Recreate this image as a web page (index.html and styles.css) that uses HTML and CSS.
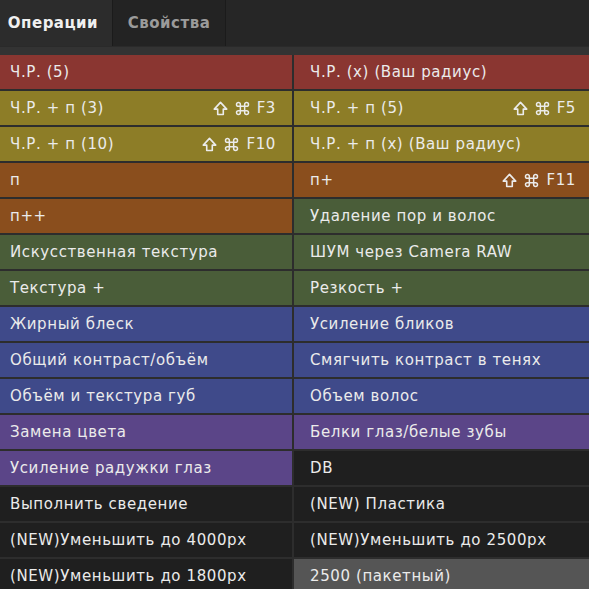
FILE: index.html
```html
<!DOCTYPE html>
<html lang="ru">
<head>
<meta charset="utf-8">
<title>Операции</title>
<link rel="stylesheet" href="styles.css">
</head>
<body>
<div class="panel">
  <div class="tabs">
    <div class="tab active">Операции</div>
    <div class="tab">Свойства</div>
    <div class="tab-fill"></div>
  </div>
  <div class="strip"></div>
  <div class="grid">
    <div class="btn red"><span>Ч.Р. (5)</span></div>
    <div class="btn red"><span>Ч.Р. (x) (Ваш радиус)</span></div>

    <div class="btn yellow"><span>Ч.Р. + п (3)</span><span class="keys"><svg class="shift" viewBox="0 0 14 14"><path d="M7 1.3 L12.8 7.6 H9.6 V12.6 H4.4 V7.6 H1.2 Z" fill="none" stroke="currentColor" stroke-width="1.5" stroke-linejoin="round"/></svg><svg class="cmd" viewBox="0 0 14 14"><path d="M5 5 H9 V9 H5 Z M5 5 V3.2 A1.8 1.8 0 1 0 3.2 5 H5 M9 5 V3.2 A1.8 1.8 0 1 1 10.8 5 H9 M5 9 V10.8 A1.8 1.8 0 1 1 3.2 9 H5 M9 9 V10.8 A1.8 1.8 0 1 0 10.8 9 H9" fill="none" stroke="currentColor" stroke-width="1.4"/></svg><span>F3</span></span></div>
    <div class="btn yellow"><span>Ч.Р. + п (5)</span><span class="keys"><svg class="shift" viewBox="0 0 14 14"><path d="M7 1.3 L12.8 7.6 H9.6 V12.6 H4.4 V7.6 H1.2 Z" fill="none" stroke="currentColor" stroke-width="1.5" stroke-linejoin="round"/></svg><svg class="cmd" viewBox="0 0 14 14"><path d="M5 5 H9 V9 H5 Z M5 5 V3.2 A1.8 1.8 0 1 0 3.2 5 H5 M9 5 V3.2 A1.8 1.8 0 1 1 10.8 5 H9 M5 9 V10.8 A1.8 1.8 0 1 1 3.2 9 H5 M9 9 V10.8 A1.8 1.8 0 1 0 10.8 9 H9" fill="none" stroke="currentColor" stroke-width="1.4"/></svg><span>F5</span></span></div>

    <div class="btn yellow"><span>Ч.Р. + п (10)</span><span class="keys"><svg class="shift" viewBox="0 0 14 14"><path d="M7 1.3 L12.8 7.6 H9.6 V12.6 H4.4 V7.6 H1.2 Z" fill="none" stroke="currentColor" stroke-width="1.5" stroke-linejoin="round"/></svg><svg class="cmd" viewBox="0 0 14 14"><path d="M5 5 H9 V9 H5 Z M5 5 V3.2 A1.8 1.8 0 1 0 3.2 5 H5 M9 5 V3.2 A1.8 1.8 0 1 1 10.8 5 H9 M5 9 V10.8 A1.8 1.8 0 1 1 3.2 9 H5 M9 9 V10.8 A1.8 1.8 0 1 0 10.8 9 H9" fill="none" stroke="currentColor" stroke-width="1.4"/></svg><span>F10</span></span></div>
    <div class="btn yellow"><span>Ч.Р. + п (x) (Ваш радиус)</span></div>

    <div class="btn orange"><span>п</span></div>
    <div class="btn orange"><span>п+</span><span class="keys"><svg class="shift" viewBox="0 0 14 14"><path d="M7 1.3 L12.8 7.6 H9.6 V12.6 H4.4 V7.6 H1.2 Z" fill="none" stroke="currentColor" stroke-width="1.5" stroke-linejoin="round"/></svg><svg class="cmd" viewBox="0 0 14 14"><path d="M5 5 H9 V9 H5 Z M5 5 V3.2 A1.8 1.8 0 1 0 3.2 5 H5 M9 5 V3.2 A1.8 1.8 0 1 1 10.8 5 H9 M5 9 V10.8 A1.8 1.8 0 1 1 3.2 9 H5 M9 9 V10.8 A1.8 1.8 0 1 0 10.8 9 H9" fill="none" stroke="currentColor" stroke-width="1.4"/></svg><span>F11</span></span></div>

    <div class="btn orange"><span>п++</span></div>
    <div class="btn green"><span>Удаление пор и волос</span></div>

    <div class="btn green"><span>Искусственная текстура</span></div>
    <div class="btn green"><span>ШУМ через Camera RAW</span></div>

    <div class="btn green"><span>Текстура +</span></div>
    <div class="btn green"><span>Резкость +</span></div>

    <div class="btn blue"><span>Жирный блеск</span></div>
    <div class="btn blue"><span>Усиление бликов</span></div>

    <div class="btn blue"><span>Общий контраст/объём</span></div>
    <div class="btn blue"><span>Смягчить контраст в тенях</span></div>

    <div class="btn blue"><span>Объём и текстура губ</span></div>
    <div class="btn blue"><span>Объем волос</span></div>

    <div class="btn purple"><span>Замена цвета</span></div>
    <div class="btn purple"><span>Белки глаз/белые зубы</span></div>

    <div class="btn purple"><span>Усиление радужки глаз</span></div>
    <div class="btn black"><span>DB</span></div>

    <div class="btn black"><span>Выполнить сведение</span></div>
    <div class="btn black"><span>(NEW) Пластика</span></div>

    <div class="btn black"><span>(NEW)Уменьшить до 4000px</span></div>
    <div class="btn black"><span>(NEW)Уменьшить до 2500px</span></div>

    <div class="btn black"><span>(NEW)Уменьшить до 1800px</span></div>
    <div class="btn gray"><span>2500 (пакетный)</span></div>
  </div>
</div>
</body>
</html>
```
FILE: styles.css
```css
html, body {
  margin: 0;
  padding: 0;
  background: #2d2d2d;
  overflow: hidden;
}
body {
  width: 589px;
  height: 589px;
  font-family: "DejaVu Sans", "Liberation Sans", sans-serif;
  color: #ebebeb;
}
.panel {
  width: 589px;
}
.tabs {
  display: flex;
  height: 46px;
  margin-left: -6px;
  background: #262626;
}
.tab {
  display: flex;
  align-items: center;
  justify-content: center;
  font-size: 15px;
  font-weight: bold;
  letter-spacing: 0.5px;
  color: #9b9b9b;
  background: #232323;
  border-right: 1px solid #1b1b1b;
  width: 112px;
}
.tab.active {
  color: #f0f0f0;
  background: #2c2c2c;
  width: 118px;
}
.tab-fill {
  flex: 1;
}
.strip {
  height: 10px;
  background: #333333;
  border-top: 1px solid #2a2a2a;
  box-sizing: border-box;
}
.grid {
  display: grid;
  grid-template-columns: 298px 298px;
  grid-auto-rows: 34px;
  column-gap: 2px;
  row-gap: 2px;
  margin-top: -1px;
  margin-left: -6px;
  width: 598px;
  background: #2d2d2d;
}
.btn {
  display: flex;
  align-items: center;
  justify-content: space-between;
  padding: 0 16px;
  font-size: 15px;
  white-space: nowrap;
  overflow: hidden;
  letter-spacing: 0.6px;
}
.keys {
  display: flex;
  align-items: center;
  gap: 7px;
}
.keys svg {
  width: 15px;
  height: 15px;
  color: #ebebeb;
}
.red { background: #8a3631; }
.yellow { background: #8d7d27; }
.orange { background: #8a4e1d; }
.green { background: #4a5d39; }
.blue { background: #3f4a8a; }
.purple { background: #5b4588; }
.black { background: #1f1f1f; }
.gray { background: #555555; }
```
